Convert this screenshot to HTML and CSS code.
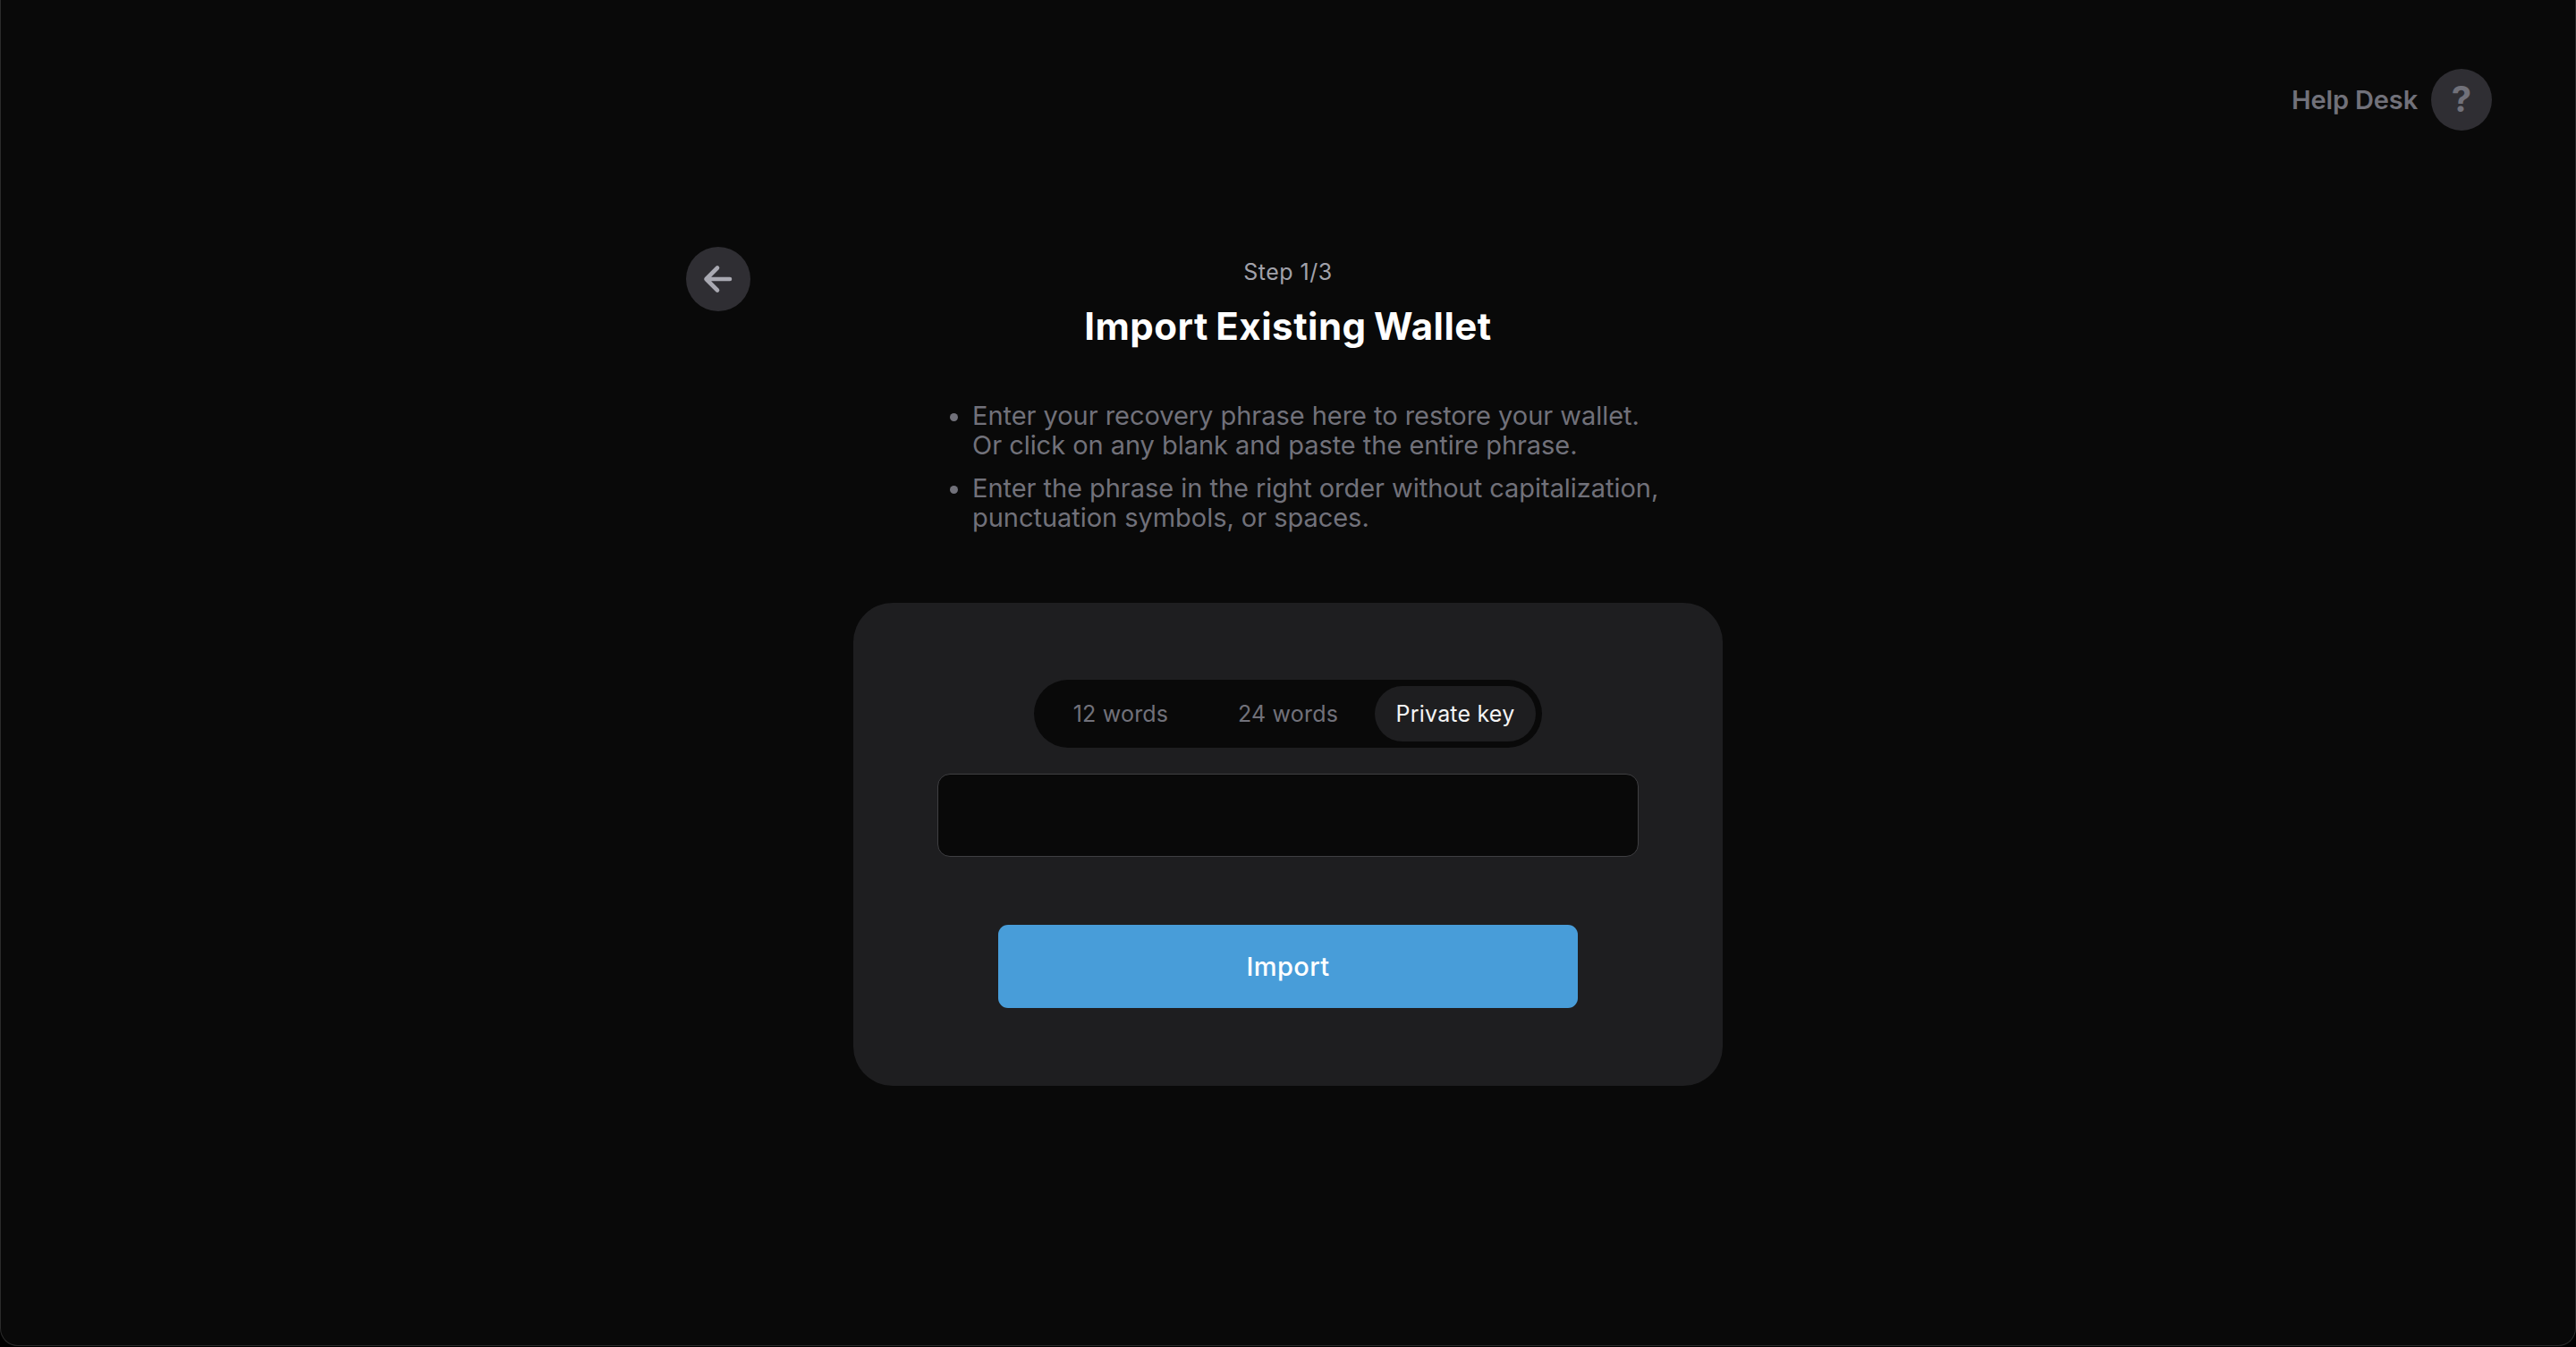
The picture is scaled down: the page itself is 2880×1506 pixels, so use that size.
FILE: index.html
```html
<!DOCTYPE html>
<html lang="en">
<head>
    <meta charset="UTF-8">
    <meta name="viewport" content="width=device-width, initial-scale=1.0">
    <title>Import Existing Wallet</title>
    <link rel="stylesheet" href="styles.css">
</head>
<body>
    <div class="window">
        <header class="topbar">
            <a class="help" href="#">
                <span class="help-label">Help Desk</span>
                <span class="help-icon">?</span>
            </a>
        </header>

        <main class="content">
            <button class="back" aria-label="Back">
                <svg width="36" height="36" viewBox="0 0 36 36" fill="none" stroke="currentColor" stroke-width="4.6" stroke-linecap="round" stroke-linejoin="round">
                    <path d="M31 18H4.5M17 5.5L4.5 18L17 30.5"/>
                </svg>
            </button>

            <section class="import">
                <p class="step">Step 1/3</p>
                <h1>Import Existing Wallet</h1>

                <ul class="hints">
                    <li>Enter your recovery phrase here to restore your wallet.<br>Or click on any blank and paste the entire phrase.</li>
                    <li>Enter the phrase in the right order without capitalization,<br>punctuation symbols, or spaces.</li>
                </ul>

                <form class="card">
                    <div class="tabs">
                        <button type="button" class="tab">12 words</button>
                        <button type="button" class="tab">24 words</button>
                        <button type="button" class="tab active">Private key</button>
                    </div>
                    <input class="key-input" type="text" aria-label="Private key">
                    <button type="button" class="submit">Import</button>
                </form>
            </section>
        </main>
    </div>
</body>
</html>
```
FILE: styles.css
```css
* {
    box-sizing: border-box;
}

body {
    margin: 0;
    height: 100vh;
    background-color: #000;
    font-family: Inter, "Liberation Sans", sans-serif;
    color: #71717a;
    overflow: hidden;
}

button {
    font-family: inherit;
    border: none;
    padding: 0;
    cursor: pointer;
}

.window {
    height: 1505px;
    background-color: #090909;
    border: 1px solid #2b2b2b;
    border-top: none;
    border-radius: 0 0 20px 20px;
}

.topbar {
    display: flex;
    justify-content: flex-end;
    padding: 77px 93px 0 0;
}

.help {
    display: flex;
    align-items: center;
    gap: 15px;
    color: #71717a;
    text-decoration: none;
    font-weight: 600;
}

.help-label {
    font-size: 29px;
    letter-spacing: -0.15px;
}

.help-icon {
    display: flex;
    align-items: center;
    justify-content: center;
    width: 68px;
    height: 69px;
    padding-bottom: 2px;
    border-radius: 50%;
    background-color: #2f2e33;
    font-size: 40px;
    font-weight: 700;
}

.content {
    display: grid;
    grid-template-columns: 1fr 972px 1fr;
    padding-top: 130px;
}

.back {
    justify-self: end;
    display: flex;
    align-items: center;
    justify-content: center;
    width: 72px;
    height: 72px;
    margin-right: 115px;
    border-radius: 50%;
    background-color: #2f2e33;
    color: #a9a9b2;
}

.import {
    grid-column: 2;
    padding-top: 12px;
}

.step {
    margin: 0;
    text-align: center;
    font-size: 25px;
    line-height: 32px;
    letter-spacing: 0.5px;
    color: #a1a1aa;
}

h1 {
    margin: 19px 0 0;
    text-align: center;
    font-size: 42px;
    font-weight: 700;
    line-height: 52px;
    letter-spacing: 0.5px;
    word-spacing: -2px;
    color: #fff;
}

.hints {
    margin: 57px 0 0;
    padding: 0 0 0 133px;
    list-style: none;
    font-size: 29px;
    line-height: 33px;
    letter-spacing: -0.04px;
    white-space: nowrap;
}

.hints li {
    position: relative;
    margin-bottom: 15px;
}

.hints li::before {
    content: "";
    position: absolute;
    left: -25px;
    top: 14px;
    width: 9px;
    height: 9px;
    border-radius: 50%;
    background-color: #71717a;
}

.card {
    display: flex;
    flex-direction: column;
    align-items: center;
    height: 540px;
    margin-top: 79px;
    padding-top: 86px;
    border-radius: 44px;
    background-color: #1e1e20;
}

.tabs {
    display: flex;
    justify-content: space-between;
    width: 568px;
    height: 76px;
    padding: 7px;
    border-radius: 38px;
    background-color: #090909;
}

.tab {
    width: 180px;
    border-radius: 31px;
    background: none;
    color: #71717a;
    font-size: 25px;
    letter-spacing: 0.2px;
}

.tab.active {
    background-color: #1e1e20;
    color: #f4f4f5;
}

.key-input {
    width: 784px;
    height: 93px;
    margin-top: 29px;
    padding: 0 24px;
    border: 1px solid #3f3f42;
    border-radius: 14px;
    background-color: #090909;
    color: #fff;
    font-size: 28px;
    outline: none;
}

.submit {
    width: 648px;
    height: 93px;
    margin-top: 76px;
    border-radius: 11px;
    background-color: #489dd9;
    color: #fff;
    font-size: 29px;
    font-weight: 500;
    letter-spacing: 0.4px;
}
```
